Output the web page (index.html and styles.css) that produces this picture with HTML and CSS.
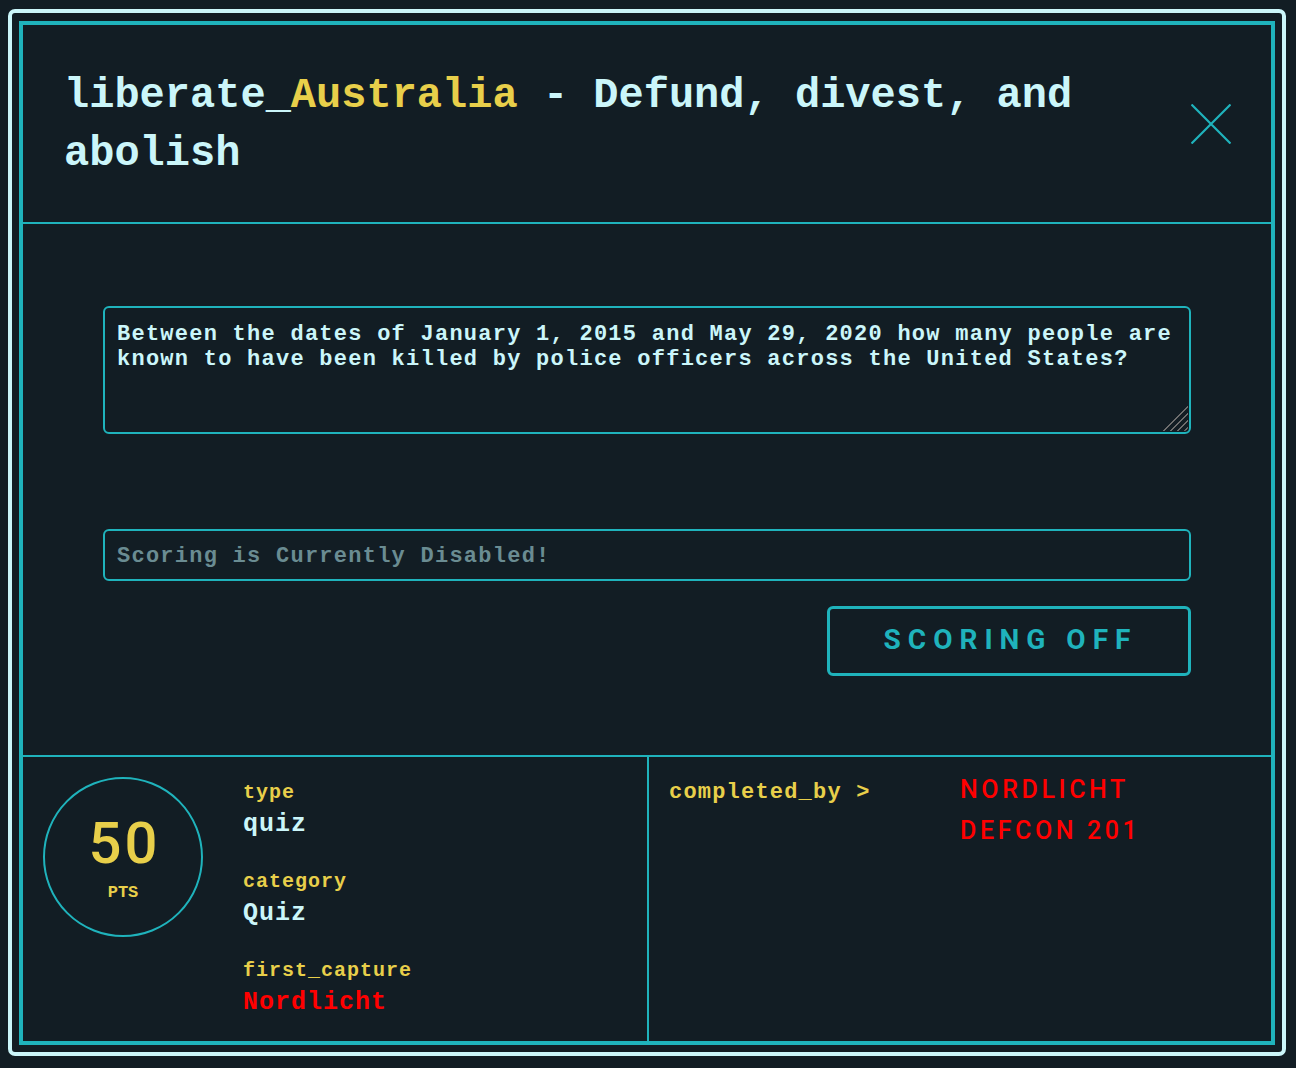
FILE: index.html
```html
<!DOCTYPE html>
<html lang="en">
<head>
<meta charset="utf-8">
<title>liberate_Australia</title>
<link rel="stylesheet" href="styles.css">
</head>
<body>
<div class="modal">
  <div class="panel">
    <header class="head">
      <h1 class="title">liberate_<span class="hl">Australia</span> - Defund, divest, and<br>abolish</h1>
      <button class="close" aria-label="Close">
        <svg width="40" height="40" viewBox="0 0 40 40"><path d="M0.5 0.5 L39.5 39.5 M39.5 0.5 L0.5 39.5" stroke="#1fb3bc" stroke-width="2.2" fill="none"/></svg>
      </button>
    </header>
    <section class="body">
      <div class="qwrap">
        <textarea class="question" readonly>Between the dates of January 1, 2015 and May 29, 2020 how many people are known to have been killed by police officers across the United States?</textarea>
        <span class="grip"></span>
      </div>
      <input class="answer" type="text" placeholder="Scoring is Currently Disabled!" disabled>
      <button class="submit">SCORING OFF</button>
    </section>
    <footer class="foot">
      <div class="info">
        <div class="points">
          <div class="num">50</div>
          <div class="pts">PTS</div>
        </div>
        <dl class="meta">
          <dt>type</dt>
          <dd>quiz</dd>
          <dt>category</dt>
          <dd>Quiz</dd>
          <dt>first_capture</dt>
          <dd class="red">Nordlicht</dd>
        </dl>
      </div>
      <div class="solves">
        <div class="solves-label">completed_by &gt;</div>
        <ul class="solvers">
          <li>NORDLICHT</li>
          <li>DEFCON 201</li>
        </ul>
      </div>
    </footer>
  </div>
</div>
</body>
</html>
```
FILE: styles.css
```css
* { box-sizing: border-box; }
html, body { margin: 0; padding: 0; }
body {
  background: #121d24;
  width: 1296px;
  height: 1068px;
  overflow: hidden;
  font-family: "Liberation Mono", "Courier New", monospace;
  font-weight: 700;
  color: #cbf6fa;
}
.modal {
  margin: 9px 0 0 8px;
  width: 1278px;
  height: 1047px;
  border: 4px solid #cbf6fa;
  border-radius: 7px;
  padding: 8px 7px 6px 7px;
}
.panel {
  height: 1024px;
  border: 4px solid #1fb3bc;
  display: flex;
  flex-direction: column;
  overflow: hidden;
}
.head {
  flex: 0 0 199px;
  border-bottom: 2px solid #1fb3bc;
  display: flex;
  align-items: center;
  padding: 0 40px 0 41px;
}
.title {
  flex: 1;
  margin: 0;
  font-size: 42px;
  line-height: 58px;
  font-weight: 700;
  color: #cbf6fa;
  padding-right: 40px;
  position: relative;
  top: 1px;
}
.hl { color: #e8cf4a; }
.close {
  width: 40px;
  height: 40px;
  padding: 0;
  border: 0;
  background: none;
  display: flex;
  flex: 0 0 40px;
}
.body {
  flex: 0 0 533px;
  border-bottom: 2px solid #1fb3bc;
  display: flex;
  flex-direction: column;
  padding: 82px 80px 0 80px;
}
.qwrap {
  position: relative;
  height: 128px;
}
.question {
  display: block;
  width: 100%;
  height: 128px;
  background: transparent;
  border: 2px solid #1fb3bc;
  border-radius: 6px;
  padding: 14px 12px 10px 12px;
  color: #cbf6fa;
  font-family: "Liberation Mono", "Courier New", monospace;
  font-weight: 700;
  font-size: 22px;
  letter-spacing: 1.25px;
  line-height: 25px;
  outline: none;
  resize: none;
}
.grip {
  position: absolute;
  right: 3px;
  bottom: 3px;
  width: 26px;
  height: 26px;
  clip-path: polygon(100% 0, 100% 100%, 0 100%);
  background: repeating-linear-gradient(135deg, transparent 0 3.6px, #6e6e6e 3.6px 5px);
  border-bottom-right-radius: 4px;
}
.answer {
  display: block;
  width: 100%;
  height: 52px;
  margin-top: 95px;
  background: transparent;
  border: 2px solid #1fb3bc;
  border-radius: 6px;
  padding: 2px 12px 0 12px;
  font-family: "Liberation Mono", "Courier New", monospace;
  font-weight: 700;
  font-size: 22px;
  letter-spacing: 1.25px;
  color: #cbf6fa;
}
.answer::placeholder { color: #6a8c92; opacity: 1; }
.submit {
  align-self: flex-end;
  margin-top: 25px;
  width: 364px;
  height: 70px;
  background: transparent;
  border: 3px solid #1fb3bc;
  border-radius: 6px;
  color: #1fb3bc;
  font-family: Roboto, "Liberation Sans", sans-serif;
  font-weight: 700;
  font-size: 28px;
  letter-spacing: 7px;
  padding: 0 0 4px 3px;
}
.foot {
  flex: 1 1 auto;
  min-height: 0;
  display: flex;
}
.info {
  width: 626px;
  border-right: 2px solid #1fb3bc;
  display: flex;
  align-items: flex-start;
  padding: 20px 0 0 20px;
}
.points {
  width: 160px;
  height: 160px;
  border: 2px solid #1fb3bc;
  border-radius: 50%;
  display: flex;
  flex-direction: column;
  align-items: center;
  color: #e8cf4a;
}
.num {
  font-family: Roboto, "Liberation Sans", sans-serif;
  font-weight: 500;
  font-size: 58px;
  letter-spacing: 3px;
  line-height: 60px;
  margin-top: 34px;
  padding-left: 3px;
}
.pts {
  font-size: 17px;
  line-height: 18px;
  margin-top: 11px;
}
.meta {
  margin: 4px 0 0 40px;
}
.meta dt {
  font-size: 20px;
  line-height: 24px;
  letter-spacing: 1px;
  color: #e8cf4a;
}
.meta dd {
  margin: 0 0 25px 0;
  font-size: 25px;
  line-height: 40px;
  letter-spacing: 1px;
  color: #cbf6fa;
}
.meta dd.red { color: #ff0000; margin-bottom: 0; }
.solves {
  flex: 1;
  display: flex;
  padding: 20px 0 0 20px;
}
.solves-label {
  width: 291px;
  font-size: 22px;
  line-height: 32px;
  letter-spacing: 1.2px;
  color: #e8cf4a;
}
.solvers {
  list-style: none;
  margin: 0;
  padding: 0;
  color: #ff0000;
  font-family: Roboto, "Liberation Sans", sans-serif;
  font-weight: 500;
  font-size: 25px;
  letter-spacing: 3.6px;
  line-height: 41px;
}
.solvers li { margin-top: -8px; margin-bottom: 8px; }
```
